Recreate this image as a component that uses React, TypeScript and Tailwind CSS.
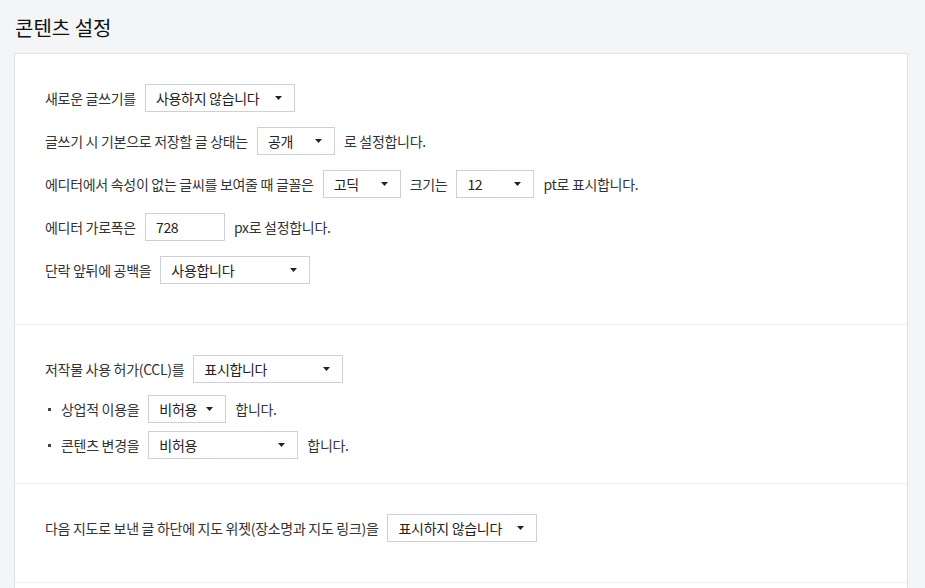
import React from 'react'

const FONT = { fontFamily: '"Noto Sans CJK KR", "Noto Sans", sans-serif' }

function Select({ value, width }: { value: string; width: string }) {
  return (
    <div
      className={`relative flex h-[28px] items-center border border-[#cdd0d8] bg-white pl-[10px] text-[14px] text-[#222] ${width}`}
    >
      <span>{value}</span>
      <svg className="absolute right-[12px] top-1/2 -translate-y-1/2" width="7" height="4" viewBox="0 0 7 4">
        <path d="M0 0h7L3.5 4z" fill="#222" />
      </svg>
    </div>
  )
}

function Row({ children, className = '' }: { children: React.ReactNode; className?: string }) {
  return (
    <div className={`flex items-center gap-[9px] text-[14px] tracking-[-0.3px] text-[#333] ${className}`}>
      {children}
    </div>
  )
}

function Bullet() {
  return <span className="ml-[3px] mr-px inline-block h-[3px] w-[3px] bg-[#444]" />
}

export default function App() {
  return (
    <div className="min-h-screen bg-[#f4f5f7] pl-[14px] pr-[17px]" style={FONT}>
      <h1 className="pl-px pt-[14px] pb-[12px] text-[20px] leading-[27px] text-[#111]">콘텐츠 설정</h1>

      <div className="border border-[#dfe0e6] bg-white">
        <section className="flex flex-col gap-[15px] pl-[30px] pt-[30px] pb-[40px]">
          <Row>
            새로운 글쓰기를
            <Select value="사용하지 않습니다" width="w-[150px]" />
          </Row>
          <Row>
            글쓰기 시 기본으로 저장할 글 상태는
            <Select value="공개" width="w-[78px]" />
            <span>로 설정합니다.</span>
          </Row>
          <Row>
            에디터에서 속성이 없는 글씨를 보여줄 때 글꼴은
            <Select value="고딕" width="w-[78px]" />
            <span>크기는</span>
            <Select value="12" width="w-[78px]" />
            <span>pt로 표시합니다.</span>
          </Row>
          <Row>
            에디터 가로폭은
            <input
              readOnly
              value="728"
              className="h-[28px] w-[80px] border border-[#cdd0d8] bg-white pl-[10px] text-[14px] text-[#222] outline-none"
            />
            <span>px로 설정합니다.</span>
          </Row>
          <Row>
            단락 앞뒤에 공백을
            <Select value="사용합니다" width="w-[150px]" />
          </Row>
        </section>

        <section className="border-t border-[#eeeff2] pl-[30px] pt-[30px] pb-[24px]">
          <Row>
            저작물 사용 허가(CCL)를
            <Select value="표시합니다" width="w-[150px]" />
          </Row>
          <Row className="mt-[12px]">
            <Bullet />
            상업적 이용을
            <Select value="비허용" width="w-[78px]" />
            <span>합니다.</span>
          </Row>
          <Row className="mt-[8px]">
            <Bullet />
            콘텐츠 변경을
            <Select value="비허용" width="w-[150px]" />
            <span>합니다.</span>
          </Row>
        </section>

        <section className="border-t border-[#eeeff2] pl-[30px] pt-[30px] pb-[40px]">
          <Row>
            다음 지도로 보낸 글 하단에 지도 위젯(장소명과 지도 링크)을
            <Select value="표시하지 않습니다" width="w-[150px]" />
          </Row>
        </section>

        <section className="h-[60px] border-t border-[#eeeff2]" />
      </div>
    </div>
  )
}
